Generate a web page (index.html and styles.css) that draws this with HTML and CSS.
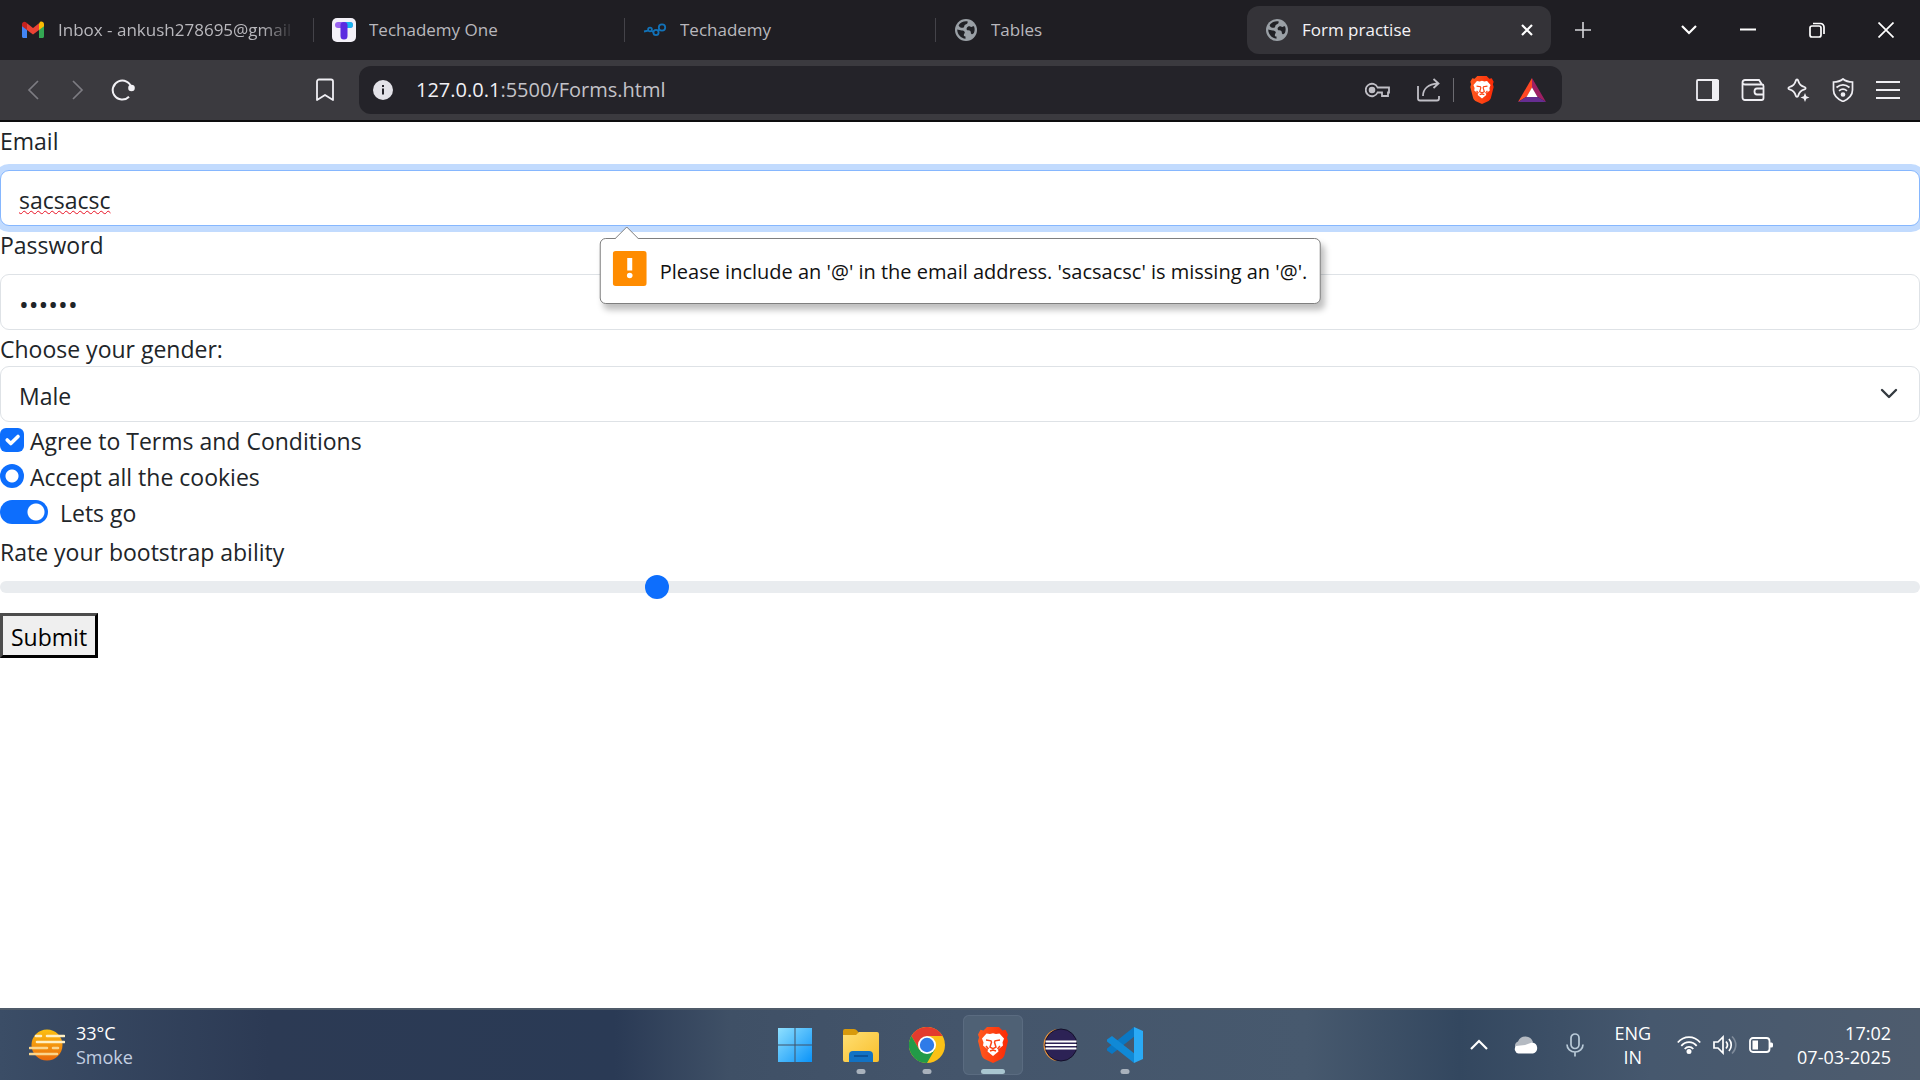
FILE: index.html
```html
<!DOCTYPE html>
<html lang="en">
<head>
<meta charset="utf-8">
<title>Form practise</title>
<link rel="stylesheet" href="styles.css">
</head>
<body>
<svg class="defs" aria-hidden="true">
  <defs>
    <linearGradient id="g-lion" x1="0" y1="0" x2="1" y2="0"><stop offset="0" stop-color="#ff5a1f"/><stop offset="1" stop-color="#fb2a06"/></linearGradient>
    <linearGradient id="g-win" x1="0" y1="0" x2="1" y2="1"><stop offset="0" stop-color="#8fe0ff"/><stop offset="1" stop-color="#0a93f8"/></linearGradient>
    <linearGradient id="g-folder" x1="0" y1="0" x2="1" y2="1"><stop offset="0" stop-color="#ffdf73"/><stop offset="1" stop-color="#f9bf2c"/></linearGradient>
    <linearGradient id="g-sun" x1="0" y1="0" x2="0" y2="1"><stop offset="0" stop-color="#fcc010"/><stop offset="1" stop-color="#ea6a0c"/></linearGradient>
    <symbol id="globe" viewBox="0 0 22 22">
      <circle cx="11" cy="11" r="11" fill="#9aa0a6"/>
      <path d="M12.500 2.300C9 1.800 5.500 3 3.600 6.200c.8 2.300 2.600 2.900 4.400 2.600 1.900-.4.800-2.300 2.100-3 1.500-.8 3-.8 2.400-3.500zM2.200 10.500c0 5 3.800 8.800 8.300 9.200v-2.200c-2.300.1-1.800-2.200-1-3.200 1-1.200-.6-2.900-2.300-2.900-1.800.1-3.300-.5-5-.9zM13.200 7.500c-1.700.8-2.300 3-.8 3.700 1.500.6 2.600-.2 3.200 1.200.5 1.200-.1 1.900.9 2.600.8.500 1.700 0 2.400-1 .8-2 1.100-4.400.2-6.600-1.300-.4-1.500.6-2.700.6-1.400-.1-1.900-1-3.200-.5z" fill="#202126"/>
    </symbol>
    <symbol id="lion" viewBox="0 0 30 36">
      <path d="M9 0h12l3.500 3.400 3-.6L30 7.500l-1 3 1 3.500-3.500 14c-.5 1.800-1.600 3-3 4L15 36l-8.500-4c-1.400-1-2.500-2.200-3-4L0 14l1-3.500-1-3 2.500-4.700 3 .6z" fill="url(#g-lion)"/>
      <path d="M8.500 6.500 12 7l3-.8 3 .8 3.500-.5 4.500 5-1.500 4 .5 3-5 4 .5 2-5.500 4.500L9.500 24.500l.5-2-5-4 .5-3-1.500-4z" fill="#fff"/>
      <path d="m8 13 5 .8.500 1.400-1.500 5 3 1.500 3-1.500-1.500-5 .500-1.400 5-.8M8 19l2.500 3M22 19l-2.500 3M12 24l3-1 3 1" fill="none" stroke="#fb4516" stroke-width="1.500"/>
    </symbol>
  </defs>
</svg>

<header class="browser">
  <div class="tabstrip">
    <nav class="tabs" aria-label="Tabs">
      <a class="tab" href="#inbox">
        <svg class="tab-icon" viewBox="0 0 22 22"><path d="M0 5v12.500c0 .9.700 1.500 1.500 1.500H5V9.500z" fill="#4285f4"/><path d="M22 5v12.500c0 .9-.7 1.500-1.500 1.500H17V9.500z" fill="#34a853"/><path d="M17 4.500V11l5-3.800V5.200c0-2.400-2.600-3.300-4-2.200z" fill="#fbbc04"/><path d="M5 11V4.300l6 4.600 6-4.600V11l-6 4.600z" fill="#ea4335"/><path d="M0 5.200v2L5 11V4.300L4 3.200C2.500 2 0 2.900 0 5.200z" fill="#c5221f"/></svg>
        <span class="tab-title fade">Inbox - ankush278695@gmail</span>
      </a>
      <a class="tab" href="#techademy-one">
        <svg class="tab-icon" viewBox="0 0 22 22"><rect x="-1" y="-1" width="24" height="24" rx="5" fill="#f3f1f8"/><rect x="2" y="3" width="18" height="6" rx="3" fill="#9a63f0"/><path d="M12 3h5a3 3 0 0 1 0 6h-5z" fill="#19b5ee"/><path d="M7.500 6a3.500 3 0 0 1 7 0v11a3.500 3.500 0 0 1-7 0z" fill="#5b2be0"/></svg>
        <span class="tab-title">Techademy One</span>
      </a>
      <a class="tab" href="#techademy">
        <svg class="tab-icon" viewBox="0 0 22 22" fill="none" stroke="#1272b8" stroke-width="1.800"><circle cx="18" cy="8.500" r="3.200"/><circle cx="12" cy="13.500" r="2.600"/><circle cx="6" cy="10.500" r="1.900"/><path d="M0 12.500l4-.8M7.500 12l2 1M14 11.500l1.500-1"/></svg>
        <span class="tab-title">Techademy</span>
      </a>
      <a class="tab" href="#tables">
        <svg class="tab-icon"><use href="#globe"/></svg>
        <span class="tab-title">Tables</span>
      </a>
      <div class="tab active">
        <svg class="tab-icon"><use href="#globe"/></svg>
        <span class="tab-title">Form practise</span>
        <button class="tab-close" aria-label="Close tab"><svg width="12" height="12" viewBox="0 0 12 12"><path d="m1 1 10 10M11 1 1 11" stroke="#fff" stroke-width="2.200"/></svg></button>
      </div>
    </nav>
    <button class="icon-btn new-tab" aria-label="New tab"><svg width="16" height="16" viewBox="0 0 16 16"><path d="M8 0v16M0 8h16" stroke="#d6d6da" stroke-width="1.600"/></svg></button>
    <div class="window-controls">
      <button class="icon-btn narrow" aria-label="Search tabs"><svg width="16" height="10" viewBox="0 0 16 10"><path d="m1 1 7 7 7-7" fill="none" stroke="#fff" stroke-width="2.200"/></svg></button>
      <button class="icon-btn" aria-label="Minimize"><svg width="16" height="16" viewBox="0 0 16 16"><path d="M0 7.500h16" stroke="#fff" stroke-width="2"/></svg></button>
      <button class="icon-btn" aria-label="Restore"><svg width="16" height="16" viewBox="0 0 16 16" fill="none" stroke="#fff" stroke-width="1.700"><rect x="1" y="4" width="11" height="11" rx="2"/><path d="M4 1.500h7.500a3.500 3.500 0 0 1 3.500 3.500v7"/></svg></button>
      <button class="icon-btn" aria-label="Close"><svg width="16" height="16" viewBox="0 0 16 16"><path d="m.5.5 15 15M15.500.5l-15 15" stroke="#fff" stroke-width="1.700"/></svg></button>
    </div>
  </div>

  <div class="toolbar">
    <button class="tool" aria-label="Back"><svg width="12" height="20" viewBox="0 0 12 20"><path d="M11 1 2 10l9 9" fill="none" stroke="#7d7c82" stroke-width="1.700"/></svg></button>
    <button class="tool" aria-label="Forward"><svg width="12" height="20" viewBox="0 0 12 20"><path d="m1 1 9 9-9 9" fill="none" stroke="#7d7c82" stroke-width="1.700"/></svg></button>
    <button class="tool" aria-label="Reload"><svg width="24" height="24" viewBox="0 0 24 24"><path d="M20.500 10A9.500 9.500 0 1 0 18 18.700" fill="none" stroke="#f2f1f5" stroke-width="2"/><circle cx="20.500" cy="10" r="3.300" fill="#f2f1f5"/></svg></button>
    <button class="tool bookmark" aria-label="Bookmark"><svg width="18" height="24" viewBox="0 0 18 24"><path d="M1 3.500A2 2 0 0 1 3 1.500h12a2 2 0 0 1 2 2V22l-8-5-8 5z" fill="none" stroke="#f0eff4" stroke-width="1.800" stroke-linejoin="round"/></svg></button>
    <div class="address">
      <svg width="20" height="20" viewBox="0 0 20 20"><circle cx="10" cy="10" r="10" fill="#e3e2e8"/><path d="M10 8.500v6M10 5v2" stroke="#242329" stroke-width="2"/></svg>
      <span class="url"><b>127.0.0.1</b>:5500/Forms.html</span>
      <svg class="key" width="25" height="16" viewBox="0 0 25 16" fill="none" stroke="#c0bfc6" stroke-width="1.800"><path d="M12.600 5.500A6.200 6.200 0 1 0 12.600 10.500H17V14h6v-3.500h1v-5z"/><circle cx="7" cy="8" r="2.400" fill="#c0bfc6"/></svg>
      <svg class="share" width="24" height="24" viewBox="0 0 24 24" fill="none" stroke="#c0bfc6" stroke-width="1.800"><path d="M1 8v12.500a2 2 0 0 0 2 2h17a2 2 0 0 0 2-2V18M6 18C6 11 11 6 21 5.500M16.500 1l5 4.500-5 4.500"/></svg>
      <span class="sep"></span>
      <svg class="shield" width="24" height="28"><use href="#lion"/></svg>
      <svg width="28" height="24" viewBox="0 0 28 24"><path d="M14 0v10L9 18.500 0 24z" fill="#ff4724"/><path d="M14 0 28 24l-9-5.500L14 10z" fill="#9e1f63"/><path d="M0 24l9-5.500h10l9 5.500z" fill="#662d91"/><path d="m14 9.500 5.500 9.500h-11z" fill="#fff"/></svg>
    </div>
    <button class="tool" aria-label="Sidebar"><svg width="24" height="24" viewBox="0 0 24 24"><rect x="1" y="2" width="21" height="20" rx="1" fill="none" stroke="#efeef3" stroke-width="1.800"/><path d="M16 2h7v20h-7z" fill="#efeef3"/></svg></button>
    <button class="tool" aria-label="Wallet"><svg width="24" height="24" viewBox="0 0 24 24" fill="none" stroke="#efeef3" stroke-width="1.800"><path d="M1.500 4.500c0-1.500 1-2.500 2.500-2.500h14l3 4.500M1.500 4.500c0 1.200 1 2 2.500 2h17c1 0 1.500.5 1.500 1.500v12c0 1-.7 2-2 2H4c-1.500 0-2.500-1-2.500-2.500zM22.500 10.500H16c-2 0-2.500 1.500-2.500 3s.5 3 2.500 3h6.500"/></svg></button>
    <button class="tool" aria-label="Assistant"><svg width="24" height="24" viewBox="0 0 24 24"><path d="M11 1.500c.6 0 1 .4 1.200 1.200 1 3.700 2.600 5.300 6.300 6.300 1.500.4 1.500 2 0 2.400-3.700 1-5.300 2.600-6.300 6.300-.4 1.500-2 1.500-2.400 0-1-3.700-2.600-5.300-6.300-6.300-1.500-.4-1.500-2 0-2.400C7.200 8 8.800 6.400 9.800 2.700c.2-.8.600-1.200 1.200-1.200z" fill="none" stroke="#efeef3" stroke-width="1.800"/><path d="m19 15 1.300 3.200L23.500 19.500l-3.200 1.300L19 24l-1.300-3.200-3.200-1.300 3.200-1.300z" fill="#efeef3"/></svg></button>
    <button class="tool" aria-label="VPN"><svg width="24" height="24" viewBox="0 0 24 24" fill="none" stroke="#efeef3" stroke-width="1.700"><path d="M12 1c2.500 2 5.500 3 9.500 3v8c0 5-4 9-9.500 11.500C6.500 21 2.500 17 2.500 12V4C6.500 4 9.500 3 12 1z"/><path d="M5.500 9.500c4-3.300 9-3.300 13 0M8 12.800c2.500-2 5.500-2 8 0"/><circle cx="12" cy="16.500" r="1.500" fill="#efeef3"/></svg></button>
    <button class="tool" aria-label="Menu"><svg width="24" height="20" viewBox="0 0 24 20"><path d="M0 2h24M0 10h24M0 18h24" stroke="#efeef3" stroke-width="1.900"/></svg></button>
  </div>
</header>

<main class="page">
  <form class="form" novalidate>
    <label class="form-label" for="email">Email</label>
    <div class="field">
      <input class="form-control invalid" id="email" type="email" value="sacsacsc">
      <div class="tooltip" role="alert">
        <svg class="tooltip-arrow" width="24" height="13" viewBox="0 0 24 13"><path d="M0 13 12 1l12 12" fill="#fff" stroke="#7f7f7f"/></svg>
        <svg width="34" height="35" viewBox="0 0 34 35"><rect width="34" height="35" rx="3" fill="#ff8c00"/><path d="M14.500 7h5v12.500h-5z" fill="#fff"/><circle cx="17" cy="24.500" r="2.800" fill="#fff"/></svg>
        <span class="tooltip-text">Please include an '@' in the email address. 'sacsacsc' is missing an '@'.</span>
      </div>
    </div>
    <label class="form-label" for="password">Password</label>
    <input class="form-control password" id="password" type="password" value="secret">
    <label for="gender">Choose your gender:</label>
    <div class="select-wrap">
      <select class="form-control" id="gender"><option>Male</option><option>Female</option></select>
      <svg width="18" height="12" viewBox="0 0 18 12"><path d="m2 2 7 7 7-7" fill="none" stroke="#343a40" stroke-width="2.400" stroke-linecap="round" stroke-linejoin="round"/></svg>
    </div>
    <div class="check-row">
      <span class="check-wrap">
        <input class="check" id="terms" type="checkbox" checked>
        <svg width="24" height="24" viewBox="0 0 20 20"><path d="m6 10 3 3 6-6" fill="none" stroke="#fff" stroke-width="3" stroke-linecap="round" stroke-linejoin="round"/></svg>
      </span>
      <label for="terms">Agree to Terms and Conditions</label>
    </div>
    <div class="check-row">
      <input class="check radio" id="cookies" type="radio" checked>
      <label for="cookies">Accept all the cookies</label>
    </div>
    <div class="check-row switch-row">
      <input class="check switch" id="go" type="checkbox" role="switch" checked>
      <label for="go">Lets go</label>
    </div>
    <label for="rate">Rate your bootstrap ability</label>
    <input class="range" id="rate" type="range" min="0" max="100" value="34">
    <button class="submit" type="button">Submit</button>
  </form>
</main>

<footer class="taskbar">
  <div class="weather">
    <svg width="36" height="32" viewBox="0 0 36 32"><circle cx="18" cy="16" r="15.500" fill="url(#g-sun)"/><path d="M7 7h5M18 7h17M8 13h27" stroke="#fff0c4" stroke-width="2.600" stroke-linecap="round"/><path d="M1 19h17M24 19h5M1 25h27" stroke="#fbd58c" stroke-width="2.600" stroke-linecap="round"/></svg>
    <div class="two-line"><span>33°C</span><span class="muted">Smoke</span></div>
  </div>

  <nav class="apps" aria-label="Apps">
    <button class="app" aria-label="Start"><svg width="36" height="36" viewBox="0 0 36 36"><path d="M1 1h16.500v16.500H1zM18.500 1H35v16.500H18.500zM1 18.500h16.500V35H1zM18.500 18.500H35V35H18.500z" fill="url(#g-win)"/></svg></button>
    <button class="app running" aria-label="File Explorer"><svg width="36" height="36" viewBox="0 0 36 36"><path d="M0 4q0-2 2-2h9q2 0 3 1.500L16 6v4H0z" fill="#d89a0c"/><path d="M0 8h13l3-3h18q2 0 2 2v26q0 2-2 2H2q-2 0-2-2z" fill="url(#g-folder)"/><path d="M6 35v-7q0-4 4-4h16q4 0 4 4v7z" fill="#1272c4"/><path d="M11 29h14" stroke="#0a4a8c" stroke-width="1.500"/></svg></button>
    <button class="app running" aria-label="Chrome"><svg width="36" height="36" viewBox="0 0 36 36"><circle cx="18" cy="18" r="18" fill="#fbc116"/><path d="M2.400 9A18 18 0 0 1 33.600 9H18l-7.800 13.500z" fill="#e33b2e"/><path d="M2.400 9A18 18 0 0 0 18 36l7.800-13.500H10.200z" fill="#229a48"/><circle cx="18" cy="18" r="9" fill="#fff"/><circle cx="18" cy="18" r="7.200" fill="#2f7be8"/></svg></button>
    <button class="app running current" aria-label="Brave"><svg width="30" height="36"><use href="#lion"/></svg></button>
    <button class="app" aria-label="Eclipse"><svg width="36" height="36" viewBox="0 0 36 36"><path d="M15 2a16.500 16.500 0 0 0 0 32l5-3V5z" fill="#f2973a"/><circle cx="20" cy="18" r="16" fill="#2c2255" stroke="#14102a"/><path d="M4.500 14.500h31M4.500 18h31M4.500 21.500h31" stroke="#fff" stroke-width="1.900"/></svg></button>
    <button class="app running" aria-label="Visual Studio Code"><svg width="36" height="36" viewBox="0 0 36 36"><path d="m27 0 1 9L5 27 0 23.500v-2z" fill="#0a78c4"/><path d="m27 36 1-9L5 9 0 12.500v2z" fill="#1089d6"/><path d="m27 0 9 4v28l-9 4z" fill="#2aaaf5"/></svg></button>
  </nav>

  <div class="tray">
    <svg width="18" height="12" viewBox="0 0 18 12"><path d="m1 10 8-8 8 8" fill="none" stroke="#fff" stroke-width="2.200"/></svg>
    <svg class="cloud" width="24" height="18" viewBox="0 0 24 18"><path d="M5 15a5 5 0 0 1-1-9.500A8 8 0 0 1 19 6l-7 9z" fill="#b4bac2"/><path d="M4.500 17.500A4.500 4.500 0 0 1 2 10l9-1 7-2.500a5.600 5.600 0 0 1 1 11z" fill="#fff"/></svg>
    <svg class="mic" width="18" height="24" viewBox="0 0 18 24" fill="none" stroke="#b9cad8" stroke-width="1.700"><rect x="5" y="1" width="8" height="14.500" rx="4"/><path d="M1 11.500a8 7.500 0 0 0 16 0M9 19v4.500"/></svg>
    <div class="two-line lang"><span>ENG</span><span>IN</span></div>
    <div class="status">
      <svg width="24" height="18" viewBox="0 0 24 18" fill="none" stroke="#fff" stroke-width="1.800"><path d="M.8 6.500C7-.6 17-.6 23.200 6.500M4.300 9.800c4.300-5 11.100-5 15.400 0M7.700 13c2.400-2.800 6.200-2.800 8.600 0"/><circle cx="12" cy="15.500" r="1.600" fill="#fff"/></svg>
      <svg width="24" height="20" viewBox="0 0 24 20" fill="none" stroke="#fff" stroke-width="1.700"><path d="M1 7v6h4l5 5V2L5 7zM13 6.500c1.700 2 1.700 5 0 7M16 4c3 3.500 3 8.500 0 12"/><path d="M19 1.500c5 5 5 12 0 17" stroke="#7f8b9a"/></svg>
      <svg width="24" height="16" viewBox="0 0 24 16"><rect x="1" y="1" width="19.500" height="14" rx="3" fill="none" stroke="#fff" stroke-width="1.800"/><path d="M3.500 3.500H9v9H3.500zM21 5.500h1.500q1.500 0 1.500 1.500v2q0 1.500-1.500 1.500H21z" fill="#fff"/></svg>
    </div>
    <div class="two-line clock"><span>17:02</span><span>07-03-2025</span></div>
  </div>
</footer>
</body>
</html>
```
FILE: styles.css
```css
* {
  box-sizing: border-box;
}

body {
  margin: 0;
  min-height: 100vh;
  display: flex;
  flex-direction: column;
  background: #fff;
  color: #212529;
  font-family: "Open Sans", "Noto Sans", sans-serif;
  font-size: 23px;
  line-height: 36px;
}

button,
input,
select {
  font: inherit;
  color: inherit;
  margin: 0;
}

svg {
  display: block;
  flex: none;
}

.defs {
  position: absolute;
  width: 0;
  height: 0;
}

/* Browser chrome */

.tabstrip {
  display: flex;
  align-items: center;
  height: 60px;
  padding-left: 3px;
  background: #1f1e23;
}

.tabs {
  display: flex;
  flex: 0 1 1548px;
  min-width: 0;
  gap: 7px;
}

.tab {
  position: relative;
  display: flex;
  flex: 1 1 0;
  min-width: 0;
  align-items: center;
  gap: 14px;
  height: 48px;
  padding: 0 12px 0 19px;
  border-radius: 12px;
  color: #b9b8bd;
  font-size: 17px;
  line-height: 24px;
  text-decoration: none;
}

.tab + .tab:not(.active)::before {
  content: "";
  position: absolute;
  left: -1px;
  top: 12px;
  width: 1px;
  height: 24px;
  background: #444349;
}

.tab.active {
  background: #343338;
  color: #f4f3f7;
}

.tab-icon {
  width: 22px;
  height: 22px;
  overflow: visible;
}

.tab-title {
  flex: 1;
  min-width: 0;
  overflow: hidden;
  white-space: nowrap;
}

.fade {
  -webkit-mask-image: linear-gradient(to right, #000 86%, transparent);
  mask-image: linear-gradient(to right, #000 86%, transparent);
}

.tab-close,
.icon-btn,
.tool,
.app {
  display: flex;
  flex: none;
  align-items: center;
  justify-content: center;
  padding: 0;
  border: 0;
  background: none;
}

.tab-close {
  width: 24px;
  height: 24px;
}

.icon-btn {
  width: 69px;
  height: 60px;
}

.icon-btn.new-tab {
  width: 64px;
}

.icon-btn.narrow {
  width: 48px;
}

.window-controls {
  display: flex;
  margin-left: auto;
}

.toolbar {
  display: flex;
  align-items: center;
  height: 62px;
  padding: 0 10px;
  border-bottom: 2px solid #0d0d0e;
  background: #3b3a3f;
}

.tool {
  width: 45px;
  height: 45px;
}

.bookmark {
  margin-left: 157px;
}

.address {
  display: flex;
  flex: 1;
  align-items: center;
  height: 48px;
  margin: 0 123px 0 12px;
  padding: 0 16px 0 14px;
  border-radius: 12px;
  background: #242329;
}

.url {
  flex: 1;
  margin-left: 23px;
  color: #c3c2c8;
  font-size: 20px;
  line-height: 28px;
}

.url b {
  color: #f1f0f5;
  font-weight: 400;
}

.share {
  margin: 0 12px 0 27px;
}

.sep {
  width: 1px;
  height: 24px;
  background: #6c6b71;
}

.shield {
  margin: 0 24px 0 16px;
}

/* Form page */

.page {
  flex: 1;
}

.form {
  display: flex;
  flex-direction: column;
}

.form label {
  height: 36px;
  padding-top: 1px;
}

.form .form-label {
  margin-bottom: 12px;
}

.field {
  position: relative;
}

.form-control {
  display: block;
  width: 100%;
  height: 56px;
  padding: 11px 18px 8px;
  border: 1px solid #dee2e6;
  border-radius: 9px;
  background: #fff;
  outline: none;
  appearance: none;
}

.form-control.password {
  font-size: 26px;
}

.form-control.invalid {
  border-color: #86b7fe;
  box-shadow: 0 0 0 6px #c2dbfe;
  text-decoration: underline wavy #e81123 1px;
}

.tooltip {
  position: absolute;
  z-index: 1;
  top: calc(100% + 12px);
  left: 50%;
  display: flex;
  gap: 13px;
  padding: 12px 12px 13px;
  border: 1px solid #7f7f7f;
  border-radius: 6px;
  background: #fff;
  box-shadow: 4px 6px 6px rgba(0, 0, 0, 0.25);
  color: #111;
  font-size: 20px;
  white-space: nowrap;
  transform: translateX(-50%);
}

.tooltip-text {
  padding-top: 3px;
}

.tooltip-arrow {
  position: absolute;
  left: 14px;
  bottom: 100%;
}

.select-wrap {
  display: grid;
  align-items: center;
}

.select-wrap > *,
.check-wrap > * {
  grid-area: 1 / 1;
}

.select-wrap svg {
  justify-self: end;
  margin-right: 22px;
  pointer-events: none;
}

.check-row {
  display: flex;
  align-items: center;
  gap: 6px;
}

.switch-row {
  gap: 12px;
  margin-bottom: 3px;
}

.check-wrap {
  display: grid;
}

.check-wrap svg {
  pointer-events: none;
}

.check {
  width: 24px;
  height: 24px;
  border-radius: 6px;
  background: #0d6efd;
  appearance: none;
}

.check.radio {
  border-radius: 50%;
  background: radial-gradient(circle, #fff 6px, #0d6efd 7px);
}

.check.switch {
  width: 48px;
  border-radius: 12px;
  background: radial-gradient(circle at 36px 12px, #fff 8px, #0d6efd 9px);
}

.range {
  width: 100%;
  height: 36px;
  background: none;
  appearance: none;
}

.range::-webkit-slider-runnable-track {
  height: 12px;
  border-radius: 12px;
  background: #e9ecef;
}

.range::-webkit-slider-thumb {
  width: 24px;
  height: 24px;
  margin-top: -6px;
  border-radius: 50%;
  background: #0d6efd;
  appearance: none;
}

.submit {
  align-self: flex-start;
  height: 45px;
  margin-top: 8px;
  padding: 2px 8px 0;
  border: 3px solid;
  border-color: #4c4c4c #000 #000 #4c4c4c;
  background: #efefef;
  color: #000;
}

/* Taskbar */

.taskbar {
  display: grid;
  grid-template-columns: 1fr auto 1fr;
  align-items: center;
  height: 72px;
  padding: 0 29px 1px;
  border-top: 2px solid #4f5b69;
  background: linear-gradient(to right, #3b4d66, #2c3a54 14%, #2a3a55 32%, #3f5066 38%, #44556b 50%, #47596e 68%, #33475f 76%, #46586e 86%, #4e5c6e);
  color: #fff;
}

.weather {
  display: flex;
  align-items: center;
  gap: 11px;
}

.two-line {
  display: flex;
  flex-direction: column;
  font-size: 18px;
  line-height: 24px;
}

.muted {
  color: #c3cfe2;
}

.apps {
  display: flex;
  gap: 6px;
}

.app {
  position: relative;
  width: 60px;
  height: 60px;
  border-radius: 6px;
}

.app.current {
  background: #4f6175;
  box-shadow: inset 0 0 0 1px #5a6b80;
}

.app.running::after {
  content: "";
  position: absolute;
  bottom: 1px;
  left: 50%;
  width: 9px;
  height: 5px;
  border-radius: 3px;
  background: #a9b2bd;
  transform: translateX(-50%);
}

.app.current::after {
  width: 24px;
  background: #a9c6d0;
}

.tray {
  display: flex;
  align-items: center;
  justify-content: flex-end;
}

.cloud {
  margin: 0 28px 0 26px;
}

.lang {
  align-items: center;
  margin: 0 26px 0 30px;
}

.status {
  display: flex;
  align-items: center;
  gap: 12px;
}

.clock {
  align-items: flex-end;
  margin-left: 24px;
}
```
